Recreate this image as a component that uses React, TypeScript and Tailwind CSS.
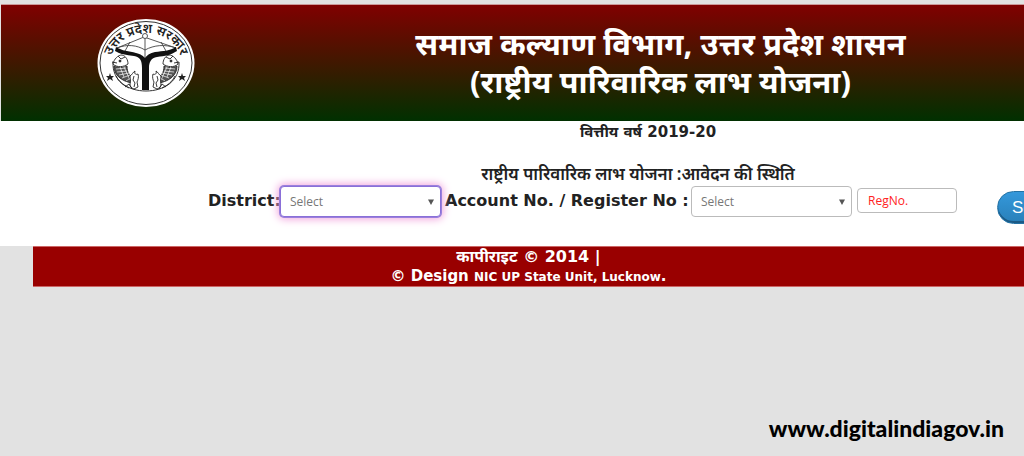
import { useState } from 'react';
import clsx from 'clsx';

interface SelectBoxProps {
  id: string;
  highlighted?: boolean;
  options: string[];
}

function SelectBox({ id, highlighted, options }: SelectBoxProps) {
  const [value, setValue] = useState('');

  return (
    <div className="relative w-[161px] shrink-0">
      <select
        id={id}
        value={value}
        onChange={(e) => setValue(e.target.value)}
        className={clsx(
          "block h-[31px] w-full appearance-none rounded border bg-white px-[9px] font-['Open_Sans',sans-serif] text-xs text-[#777] outline-none",
          highlighted
            ? 'border-[#8a6fd8] shadow-[0_0_0_1px_#9a80dc,0_0_8px_2px_#f0a0dc]'
            : 'border-[#bbb]',
        )}
      >
        <option value="">Select</option>
        {options.map(option => (
          <option key={option} value={option}>{option}</option>
        ))}
      </select>
      <svg viewBox="0 0 6 6" className="pointer-events-none absolute top-[13px] right-[7px] h-[6px] w-[6px]" aria-hidden="true">
        <path d="M0 0.5h6L3 6z" fill="#555" />
      </svg>
    </div>
  );
}

// Half of the fish pair, the other one is mirrored
function Fish() {
  return (
    <g fill="none" stroke="#222" strokeWidth="0.9">
      <path d="M16 46c1-5 5-9 9-9 4 1 6 5 6 9-4 3-11 4-15 0z" fill="#fff" />
      <path d="M21 38l3 3 4-2M15 44l5 1M24 36l2-3" />
      <circle cx="23" cy="43" r="1" fill="#222" />
      <path d="M17 48c0 9 7 15 18 17l3-5c-5-1-8-5-8-12-4 2-9 2-13 0z" fill="#555" />
      <path d="M19 51l10-1M20 54l10-1M22 57l10-2M25 60l8-3M29 63l6-4M23 49l4 10M27 49l6 13" stroke="#fff" strokeWidth="0.7" />
      <path d="M33 58c2-1 3-4 5-5-1 3 1 4 3 3 1 3 0 6-1 8l1 5-4 2c-3-1-4-3-4-5 1-3 0-5 0-8z" fill="#fff" />
      <path d="M37 58l-1 4 2 3-1 4M19 58c3 6 7 9 13 12M28 69l4-3 3 5" />
    </g>
  );
}

function Emblem() {
  return (
    <svg viewBox="0 0 98 90" className="h-[90px] w-[98px] shrink-0" role="img" aria-label="उत्तर प्रदेश सरकार">
      <defs>
        <path id="emblem-arc" d="M13 47A36 32 0 0 1 85 47" />
      </defs>
      <ellipse cx="49" cy="45" rx="48.5" ry="44" fill="#fff" />
      <ellipse cx="49" cy="45" rx="46" ry="41.5" fill="none" stroke="#333" strokeWidth="1" />
      <path d="M16 44C15 63 31 73 49 73s34-10 33-29" fill="none" stroke="#333" strokeWidth="1" />
      <text fontSize="13" fontWeight="600" fill="#222" fontFamily="'Noto Sans', sans-serif">
        <textPath href="#emblem-arc" startOffset="50%" textAnchor="middle">उत्तर प्रदेश सरकार</textPath>
      </text>
      <g fill="none" stroke="#444" strokeWidth="0.9">
        <path d="M20 30L47 19l32 11M48 19v21M33 24l-5 9M64 24l5 9M20 30c10-4 20-3 28 2 9-5 20-6 31-2" />
        <circle cx="48" cy="18" r="2.5" fill="#fff" />
      </g>
      <Fish />
      <g transform="matrix(-1 0 0 1 97 0)">
        <Fish />
      </g>
      <path d="M19 29c6 4 13 4 20 6 5 1 7 3 9 5 2-3 5-5 10-6 8-1 15-1 21-5l1 4c-6 4-12 5-20 6-6 1-8 5-8 11v22h-7V50c0-8-2-11-8-12-8-1-14-2-19-5z" fill="#111" />
      <path d="M13 55l1 3h3l-2 2 1 3-3-2-3 2 1-3-2-2h3zM85 55l1 3h3l-2 2 1 3-3-2-3 2 1-3-2-2h3z" fill="#222" />
    </svg>
  );
}

function App() {
  const [regNo, setRegNo] = useState('');

  return (
    <div className="flex min-h-screen flex-col overflow-x-hidden bg-[#e2e2e2] pt-1 font-['DejaVu_Sans','Noto_Sans',sans-serif] text-[#222]">
      {/* Header band */}
      <header className="ml-px flex h-[117px] items-center border-t border-[#c99] bg-linear-to-b/srgb from-[#800000] to-[#003000] pl-24">
        <Emblem />
        <h1 className="flex-1 pb-0.5 pl-[102px] text-center font-['Noto_Sans',sans-serif] text-[31px] leading-[38px] font-bold text-white">
          समाज कल्याण विभाग, उत्तर प्रदेश शासन
          <br />
          (राष्ट्रीय पारिवारिक लाभ योजना)
        </h1>
      </header>

      <main className="bg-white pb-7">
        <h2 className="pl-[272px] text-center text-[15px] leading-[22px] font-bold">वित्तीय वर्ष 2019-20</h2>
        <h2 className="mt-5 pl-[252px] text-center font-['Noto_Sans',sans-serif] text-[17px] leading-[22px] font-semibold">
          राष्ट्रीय पारिवारिक लाभ योजना :आवेदन की स्थिति
        </h2>

        <form className="flex h-[33px] items-start pt-px pl-[208px]" onSubmit={(e) => e.preventDefault()}>
          <label htmlFor="district" className="w-[72px] shrink-0 text-base leading-[30px] font-bold whitespace-nowrap">District:</label>
          <SelectBox id="district" highlighted options={['Agra', 'Lucknow', 'Varanasi']} />
          <label htmlFor="search-by" className="w-[250px] shrink-0 pl-1 text-base leading-[30px] font-bold whitespace-nowrap">
            Account No. / Register No :
          </label>
          <SelectBox id="search-by" options={['Account No.', 'Register No.']} />
          <input
            type="text"
            aria-label="Registration number"
            placeholder="RegNo."
            value={regNo}
            onChange={(e) => setRegNo(e.target.value)}
            className="mt-0.5 ml-[5px] h-[25px] w-[100px] shrink-0 rounded border border-[#bbb] px-[10px] font-['Open_Sans',sans-serif] text-xs text-red-600 placeholder:text-[#f22]"
          />
          <button
            type="submit"
            className="mt-[5px] ml-10 h-[33px] shrink-0 rounded-full border border-[#2472a4] bg-linear-to-b from-[#3498db] to-[#2980b9] px-[14px] font-['Liberation_Sans',sans-serif] text-[17px] text-white shadow-[inset_0_-2px_0_#1c5a85]"
          >
            Search
          </button>
        </form>
      </main>

      <footer className="ml-[33px] border-y border-[#c66] bg-[#990000] text-center font-bold text-white">
        <p className="text-base leading-5">कापीराइट © 2014 |</p>
        <p className="text-[15px] leading-[18px]">© Design <span className="text-xs leading-[18px]">NIC UP State Unit, Lucknow</span>.</p>
      </footer>

      <div className="mt-auto flex justify-end pr-5 pb-4">
        <a href="#" className="font-['Lato',sans-serif] text-[23px] leading-6 font-black text-black">www.digitalindiagov.in</a>
      </div>
    </div>
  );
}

export default App;
